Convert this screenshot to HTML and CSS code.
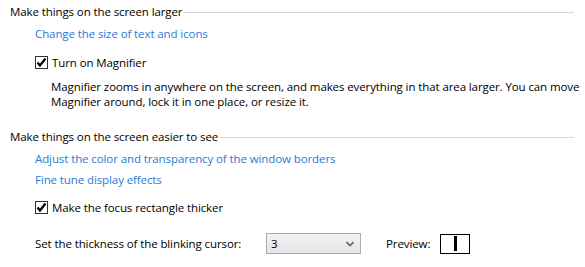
FILE: index.html
```html
<!DOCTYPE html>
<html>
<head>
<meta charset="utf-8">
<link rel="stylesheet" href="styles.css">
</head>
<body>
<div class="page">
  <div class="group">
    <div class="heading"><span class="heading-text">Make things on the screen larger</span><span class="rule"></span></div>
    <div class="body">
      <a class="link first-link" href="#">Change the size of text and icons</a>
      <label class="check"><span class="box"><svg width="11" height="11" viewBox="0 0 11 11"><path d="M1.5 5.5 L4 8.5 L9.5 1.5" fill="none" stroke="#000" stroke-width="2.2"/></svg></span><span>Turn on Magnifier</span></label>
      <p class="desc">Magnifier zooms in anywhere on the screen, and makes everything in that area larger. You can move Magnifier around, lock it in one place, or resize it.</p>
    </div>
  </div>
  <div class="group second">
    <div class="heading"><span class="heading-text">Make things on the screen easier to see</span><span class="rule"></span></div>
    <div class="body">
      <a class="link first-link" href="#">Adjust the color and transparency of the window borders</a>
      <a class="link next-link" href="#">Fine tune display effects</a>
      <label class="check check-second"><span class="box"><svg width="11" height="11" viewBox="0 0 11 11"><path d="M1.5 5.5 L4 8.5 L9.5 1.5" fill="none" stroke="#000" stroke-width="2.2"/></svg></span><span>Make the focus rectangle thicker</span></label>
      <div class="cursor-row">
        <span class="cursor-label">Set the thickness of the blinking cursor:</span>
        <span class="select"><span>3</span><svg class="chev" width="8" height="6" viewBox="0 0 8 6"><path d="M0.5 1 L4 4.5 L7.5 1" fill="none" stroke="#666" stroke-width="1.6"/></svg></span>
        <span class="preview-label">Preview:</span>
        <span class="preview"><span class="caret"></span></span>
      </div>
    </div>
  </div>
</div>
</body>
</html>
```
FILE: styles.css
```css
html, body {
  margin: 0;
  padding: 0;
  background: #fff;
}
body {
  width: 585px;
  height: 267px;
  overflow: hidden;
  font-family: "Open Sans", "Noto Sans", "DejaVu Sans", sans-serif;
  font-size: 11.5px;
  letter-spacing: -0.1px;
  line-height: 15px;
  color: #000;
}
.page {
  padding: 4px 11px 0 10px;
}
.heading {
  display: flex;
  align-items: center;
  height: 15px;
}
.heading-text {
  white-space: nowrap;
}
.rule {
  flex: 1;
  height: 0;
  border-top: 1px solid #d5d5d5;
  margin-left: 2px;
  margin-top: 1px;
}
.body {
  padding-left: 25px;
  display: flex;
  flex-direction: column;
  align-items: flex-start;
}
.link {
  color: #2a7ad6;
  text-decoration: none;
  display: block;
  height: 15px;
}
.first-link {
  margin-top: 7px;
}
.next-link {
  margin-top: 6px;
}
.check {
  display: flex;
  align-items: center;
  margin-top: 14px;
  height: 15px;
}
.check-second {
  margin-top: 13px;
}
.box {
  width: 11px;
  height: 11px;
  border: 1px solid #333;
  background: #fff;
  margin-right: 4px;
  display: flex;
  align-items: center;
  justify-content: center;
}
.box svg {
  display: block;
}
.desc {
  margin: 9px 0 0 16px;
  width: 540px;
}
.second {
  margin-top: 20px;
}
.cursor-row {
  display: flex;
  align-items: center;
  margin-top: 18px;
}
.cursor-label {
  width: 231px;
}
.select {
  border: 1px solid #acacac;
  background: linear-gradient(#f2f2f2, #e5e5e5);
  display: flex;
  align-items: center;
  justify-content: space-between;
  padding: 0 6px 0 4px;
  box-sizing: border-box;
  width: 95px;
  height: 21px;
}
.preview-label {
  margin-left: 25px;
  width: 54px;
}
.preview {
  width: 30px;
  height: 20px;
  border: 1px solid #000;
  box-sizing: border-box;
  display: flex;
  align-items: center;
  justify-content: center;
}
.caret {
  width: 3px;
  height: 15px;
  background: #000;
}
```
